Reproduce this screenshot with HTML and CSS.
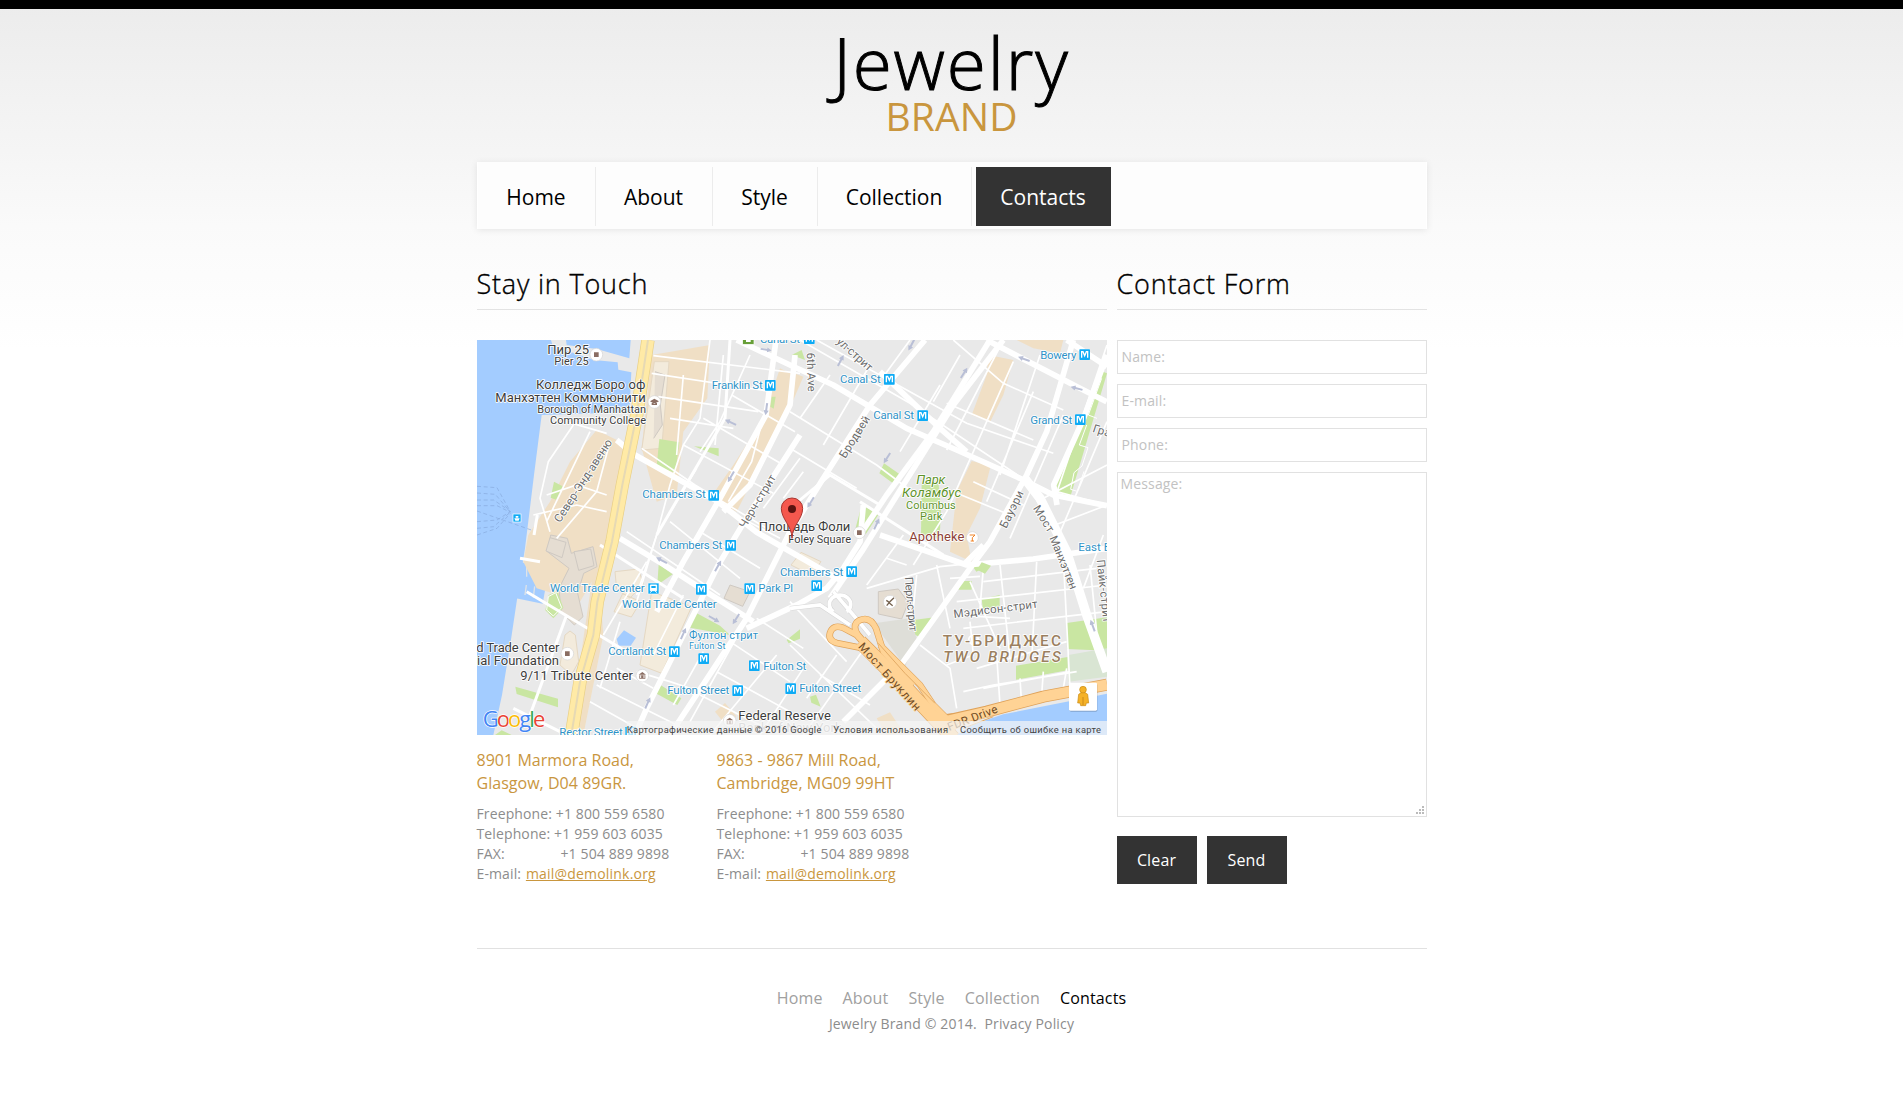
FILE: index.html
```html
<!DOCTYPE html>
<html lang="en">
<head>
<meta charset="utf-8">
<title>Jewelry Brand - Contacts</title>
<link rel="stylesheet" href="styles.css">
</head>
<body>
<div class="page">
  <header class="header">
    <h1 class="logo"><span class="logo-name">Jewelry</span><span class="logo-sub">BRAND</span></h1>
    <nav class="nav">
      <a class="nav-item nav-home">Home</a>
      <a class="nav-item nav-about">About</a>
      <a class="nav-item nav-style">Style</a>
      <a class="nav-item nav-collection">Collection</a>
      <a class="nav-item nav-current">Contacts</a>
    </nav>
  </header>

  <main class="content">
    <section class="touch">
      <h2 class="title title-touch">Stay in Touch</h2>
      <svg class="map" viewBox="21 15 1890 1185" preserveAspectRatio="none">
        <defs>
          <symbol id="metro" viewBox="0 0 34 34">
            <rect width="34" height="34" rx="3" fill="#fff"/>
            <rect x="1" y="1" width="32" height="32" rx="2" fill="#0eabf5"/>
            <path d="M8 26V8h4l5 12 5-12h4v18" fill="none" stroke="#fff" stroke-width="4"/>
          </symbol>
          <symbol id="arrow" viewBox="0 0 40 16">
            <path d="M2 8h28" stroke="#b9bfd6" stroke-width="6"/><path d="M24 0l15 8-15 8z" fill="#b9bfd6"/>
          </symbol>
        </defs>
        <rect x="21" y="15" width="1890" height="1185" fill="#e9e9e9"/>
        <!-- rivers -->
        <g fill="#a3ccff">
          <path d="M21 15H243L250 38 300 50 372 75 443 82 445 104 484 112 478 232 215 240 192 420 165 640 140 800 122 920 96 1080 70 1200H21z"/>
          <path d="M288 15H482L478 70 380 42 290 30z"/>
          <path d="M150 682L238 694 218 806 138 790z"/>
          <path d="M462 886L498 908 482 932 446 932 440 912z"/>
          <path d="M1460 1200L1500 1172 1600 1138 1911 1076V1200z"/>
        </g>
        <path d="M170 695v30M192 690v36M218 700l-6 34M165 780l4-30M190 788l4-34" stroke="#dfe3e8" stroke-width="4"/>
        <g fill="none" stroke="#86a9dd" stroke-width="2" stroke-dasharray="12 8">
          <path d="M21 454l60 4 40 72M21 474l55 4 44 52M21 495h50l50 34M21 512h60l40 20M21 560l60-5 38-24M21 580l50-5 48-42M21 600l60-20 40-45M21 528l200 70"/>
        </g>
        <!-- built-up blocks -->
        <g fill="#f0dfc5">
          <path d="M545 60L720 30 712 190 640 290 620 480 560 500 515 340z"/>
          <path d="M380 285L470 330 410 600 400 680 330 800 200 760 160 680 175 600 240 500 300 380z"/>
          <path d="M930 100L990 130 960 200 890 350 800 530 720 490 790 390 880 250z"/>
          <path d="M1555 60L1630 75 1600 180 1560 262 1505 240 1550 120z"/>
          <path d="M1640 15H1780L1770 55 1690 40z"/>
          <path d="M1505 378L1562 392 1530 520 1490 600 1505 680 1440 650 1460 470z"/>
          <path d="M960 110l40 15-30 70-30-10z"/>
          <path d="M380 640L330 980 300 1200H340L400 900z"/>
          <path d="M735 1130l30-26 34 40-30 28zM1220 1150l40-18 40 60-50 8z"/>
        </g>
        <g fill="#f3ebdc" stroke="#e5d8c3" stroke-width="3">
          <path d="M553 80h44l-22 260-60 5z"/>
          <path d="M545 770L665 815 575 1015 510 990z"/>
          <path d="M435 710l70-8 15 45-40 42-40-25zM432 830l26-54 54 24-28 46zM963 690l30-38 60 28-30 40zM285 900l15-12 16 12 10 80-22 40-34-30z"/>
        </g>
        <g fill="#e5ddd2" stroke="#cfc9c2" stroke-width="3">
          <path d="M242 600l50 10 12 45 65-20 12 60-40 20-18 60 16 70-26 25-40-40-6-70 30-60-65-50z"/>
          <path d="M240 608l48 14-12 46-48-20zM312 650l50-8 10 50-46 14zM555 110l30 10-14 90 6 60-26 40"/>
          <path d="M780 750l60 20-22 44-56-24zM1225 770l60-8 30 40-20 50-70-15z"/>
        </g>
        <!-- parks -->
        <g fill="#c9e6a2">
          <path d="M568 312l60 10-12 92-56-20z"/>
          <path d="M672 334l74 6v24zM905 185h12l-6 36-10-6zM252 440l26 14-20 40-16-6zM1242 385l46 32-16 30-44-32z"/>
          <path d="M1355 440h50l8 80-4 90-56-10z"/>
          <path d="M1175 510l52 26-40 62-30-20zM1885 105l26 10-110 370-56-20 92-210z"/>
          <path d="M566 688l42 30-46 32zM675 832l75 40 30 28-120-22zM236 780l26-12 18 50-30 32-24-24z"/>
          <path d="M136 1055l128 36v26l-124-40zM568 1048l66 42-12 20-66-36z"/>
          <path d="M1330 855l64-8-44 60-30-15zM1535 792l54-12v34l-50 10zM1790 864l84-12 37-5v100l-120-5z"/>
          <path d="M1638 992l155-26v40l-155 28zM1475 738h30v26h-40zM1505 690l26-8 10 18-22 10zM950 915l40-32v28l-34 14z"/>
          <path d="M1020 1085l18-6 14 36-28-12zM75 1200l20-14 30 14zM965 60l40 15-10-30z"/>
        </g>
        <path d="M1212 865l108-15 20 60-35 85z" fill="#deded8"/>
        <path d="M1795 960l116-20v85l-116 15z" fill="#d9e5d3"/>
        <g fill="none" stroke="#fff" stroke-width="3"><path d="M1895 130l-40 110 26 10M1850 270l-22 60 26 8-18 55-24 20-10 50 20 6 20-60"/><path d="M235 785l22-12 18 45-25 25-20-18z"/></g>

        <!-- minor streets -->
        <g fill="none" stroke="#fff" stroke-width="5">
          <path d="M550 62L990 115M545 115l360 55M565 185l300 45M600 250l190 30M515 340l160 110 215 130M640 330l270 145M700 250l240 140M785 180l190 110"/>
          <path d="M720 15L690 250 640 330 600 450 560 600M640 120l-20 240M760 60L735 330M840 60l-90 200-60 90M990 370L880 520M680 400L560 600 500 780M905 150l-60 230-70 120"/>
          <path d="M310 270l-75 110-25 110 30 100M360 290L230 560M420 320l-40 150-120 140M230 480l90-30 90 30M190 540l130-30 90 20M290 260l120 35"/>
          <path d="M990 15l330 190 330 220M1040 15l450 250 260 90M1080 120l-90 130M1200 90L1060 330M1320 15l-80 110M1410 150l-120 200M1470 60l-80 140M960 230l260 160 120 90M960 340l200 120M1000 410l-60 80"/>
          <path d="M1450 15l150 130 180 80M1430 205l260 110M1600 15l-170 330M1710 60l-120 360M1630 80l-200 450-100 160M1690 170l-140 330M1780 240l-160 370M1510 440l150 70M1450 470l170 70"/>
          <path d="M1911 30l-150 440M1911 260l-140 330M1760 470l150 40M1730 580l181-70M1700 500l211-110M1900 600l-60 160"/>
          <path d="M470 590L750 780M600 560L810 730M690 590l180 110M760 520l170 90M560 600l-60 200M640 780l-90 180M530 680L400 900M450 860l-60 200M380 1050l260 130M440 1000l110 60M500 1010l100 30 60 20M360 1100l160 90M700 950L610 1110M820 870L660 1160M740 1010L960 1130M690 1080l220 110M780 920l180 120M860 850l140 90M920 960l-200 240M1000 1000l-130 200"/>
          <path d="M1190 930L1000 1200M960 930l260 250M1100 960l-90 130M1050 1020l150 90M960 800l170 180"/>
          <path d="M1190 760l220-65 95-10M1300 600l-110 150M1250 670l60 20M1340 720l-10 100M1400 690l40 190M1440 730l90-6M1500 740l90 200M1460 800l450-50M1540 700l-10 120M1590 690l30 280M1700 680l-15 300M1780 670l20 390M1860 690l20 200"/>
          <path d="M1540 740l340-40M1450 840l170 10M1480 880l430-50M1500 860l10 100-80 30M1350 930l90 70 20 120M1520 1000l270-80M1540 1060l260-50M1580 960l10 150M1650 1030l5 80M1720 1010l-5 70M1480 1070l90-20 250-40M1790 1000l-10 60M1510 900a14 14 0 1 0 1 0"/>
        </g>
        <g fill="none" stroke="#fff" stroke-width="9">
          <path d="M780 15L765 250 560 600M290 840L180 1140M390 630L640 790M170 770l300 180M130 1120l140 70M210 680l-60-10M192 600l10-60"/>
          <path d="M1170 500l250 160M960 520l120-100 150 90"/>
        </g>
        <!-- main streets -->
        <g fill="none" stroke="#fff" stroke-width="17" stroke-linejoin="round">
          <path d="M440 315L490 357 740 497 860 592 1110 735"/>
          <path d="M450 610L580 688 700 765 850 860"/>
          <path d="M918 15L888 240 750 490 640 680 560 830"/>
          <path d="M990 300L820 565 745 690 690 800 530 1120 495 1200"/>
          <path d="M1365 15L1200 210 1060 430 960 590 830 850 600 1200"/>
          <path d="M1560 15L1390 290 1250 480 1170 600"/>
          <path d="M1600 15L1450 210 1300 450 1175 650 1080 790"/>
          <path d="M800 15l160 75 130 60 220 130 150 65 190 85 100 50 161 32"/>
          <path d="M1230 110l180 170 80 70"/>
          <path d="M1550 15l280 145 80 40M1810 15l-80 275-60 130-110 200-60 80-200 280-180 180"/>
          <path d="M1790 15l121 80M1911 60l-70 190-90 200 10 60"/>
          <path d="M830 880l160-75 80-45 50-60 50-80 10-110"/>
          <path d="M1230 600l260 90 200-18 221-32M1540 630l-60 60"/>
          <path d="M975 60l-15 150-120 240-80 80"/>
        </g>
        <path d="M1535 682l28 10-18 24-24-12z" fill="#c9e6a2"/>
        <path d="M1660 425L1710 490 1790 650 1850 840 1911 1010" fill="none" stroke="#fff" stroke-width="28"/>
        <g fill="none" stroke="#d6d6d6" stroke-width="14"><path d="M960 820l90-10 90 60M1090 770l60 70 50 60M1090 830a32 28 0 1 1 40 0"/></g>
        <g fill="none" stroke="#fff" stroke-width="11"><path d="M960 820l90-10 90 60M1090 770l60 70 50 60M1090 830a32 28 0 1 1 40 0"/></g>
        <!-- highways -->
        <path d="M534 15L500 240 457 450 426 620 382 800 370 900 330 1040 304 1200" fill="none" stroke="#e8cf86" stroke-width="40"/>
        <path d="M534 15L500 240 457 450 426 620 382 800 370 900 330 1040 304 1200" fill="none" stroke="#ffeaa6" stroke-width="36"/>
        <path d="M534 15L500 240 457 450 426 620 382 800 370 900 330 1040 304 1200" fill="none" stroke="#e6d9b4" stroke-width="6"/>
        <g fill="none" stroke-linejoin="round">
          <path d="M1235 985L1160 900 1118 878Q1088 868 1080 894 1074 916 1100 924L1190 942M1330 1050L1240 950 1218 880Q1200 842 1168 856 1144 870 1164 900L1240 990" stroke="#dfa259" stroke-width="20"/>
          <path d="M1170 920L1300 1050 1450 1210" stroke="#dfa259" stroke-width="44"/>
          <path d="M1230 930L1350 1050 1390 1110 1460 1180" stroke="#dfa259" stroke-width="20"/>
          <path d="M1400 1160l50-8 100-22 170-45 191-36" stroke="#dfa259" stroke-width="36"/>
          <path d="M1235 985L1160 900 1118 878Q1088 868 1080 894 1074 916 1100 924L1190 942M1330 1050L1240 950 1218 880Q1200 842 1168 856 1144 870 1164 900L1240 990" stroke="#ffd395" stroke-width="16"/>
          <path d="M1170 920L1300 1050 1450 1210" stroke="#ffd395" stroke-width="40"/>
          <path d="M1230 930L1350 1050 1390 1110 1460 1180" stroke="#ffd395" stroke-width="16"/>
          <path d="M1370 1130l50 30 130-30 170-45 191-36" stroke="#ffd395" stroke-width="31"/>
          <path d="M1225 925l80 90 90 90M1480 1180l90-35" stroke="#e3ab66" stroke-width="3"/>
        </g>
        <!-- one-way arrows -->
        <use href="#arrow" x="-18" y="-8" width="36" height="16" transform="translate(888 44) rotate(8)"/>
        <use href="#arrow" x="-20" y="-8" width="40" height="16" transform="translate(889 222) rotate(98)"/>
        <use href="#arrow" x="-20" y="-8" width="40" height="16" transform="translate(782 262) rotate(205)"/>
        <use href="#arrow" x="-20" y="-8" width="40" height="16" transform="translate(783 425) rotate(120)"/>
        <use href="#arrow" x="-20" y="-8" width="40" height="16" transform="translate(1112 77) rotate(-62)"/>
        <use href="#arrow" x="-20" y="-8" width="40" height="16" transform="translate(1324 30) rotate(118)"/>
        <use href="#arrow" x="-20" y="-8" width="40" height="16" transform="translate(1482 114) rotate(-58)"/>
        <use href="#arrow" x="-20" y="-8" width="40" height="16" transform="translate(1662 72) rotate(200)"/>
        <use href="#arrow" x="-20" y="-8" width="40" height="16" transform="translate(1820 160) rotate(195)"/>
        <use href="#arrow" x="-20" y="-8" width="40" height="16" transform="translate(1251 369) rotate(122)"/>
        <use href="#arrow" x="-20" y="-8" width="40" height="16" transform="translate(1022 502) rotate(122)"/>
        <use href="#arrow" x="-20" y="-8" width="40" height="16" transform="translate(1220 567) rotate(-65)"/>
        <use href="#arrow" x="-20" y="-8" width="40" height="16" transform="translate(575 676) rotate(208)"/>
        <use href="#arrow" x="-20" y="-8" width="40" height="16" transform="translate(744 693) rotate(-60)"/>
        <use href="#arrow" x="-20" y="-8" width="40" height="16" transform="translate(732 852) rotate(30)"/>
        <use href="#arrow" x="-20" y="-8" width="40" height="16" transform="translate(798 852) rotate(122)"/>
        <use href="#arrow" x="-20" y="-8" width="40" height="16" transform="translate(640 896) rotate(-66)"/>
        <use href="#arrow" x="-20" y="-8" width="40" height="16" transform="translate(533 1104) rotate(-66)"/>
        <use href="#arrow" x="-20" y="-8" width="40" height="16" transform="translate(1868 872) rotate(-110)"/>

        <!-- transit stations -->
        <g class="transit">
          <text x="870" y="25" textLength="120">Canal St</text>
          <text x="725" y="161" textLength="153">Franklin St</text>
          <text x="1110" y="143" textLength="122">Canal St</text>
          <text x="1210" y="251" textLength="122">Canal St</text>
          <text x="1711" y="71" textLength="108">Bowery</text>
          <text x="1681" y="266" textLength="126">Grand St</text>
          <text x="517" y="490" textLength="190">Chambers St</text>
          <text x="568" y="641" textLength="189">Chambers St</text>
          <text x="930" y="722" textLength="190">Chambers St</text>
          <text x="240" y="770" textLength="284">World Trade Center</text>
          <text x="456" y="818" textLength="284">World Trade Center</text>
          <text x="865" y="770" textLength="104">Park Pl</text>
          <text x="415" y="959" textLength="174">Cortlandt St</text>
          <text x="657" y="912" textLength="207" class="t30">Фултон стрит</text>
          <text x="657" y="941" textLength="109" class="t26">Fulton St</text>
          <text x="880" y="1004" textLength="129">Fulton St</text>
          <text x="592" y="1078" textLength="186">Fulton Street</text>
          <text x="988" y="1070" textLength="186">Fulton Street</text>
          <text x="268" y="1202" textLength="190">Rector Street</text>
          <text x="1825" y="647">East Broadway</text>
        </g>
        <use href="#metro" x="884" y="134" width="34" height="34"/><use href="#metro" x="714" y="464" width="34" height="34"/>
        <use href="#metro" x="1001" y="-6" width="34" height="34"/><use href="#metro" x="1241" y="116" width="34" height="34"/>
        <use href="#metro" x="1341" y="225" width="34" height="34"/><use href="#metro" x="1827" y="42" width="34" height="34"/>
        <use href="#metro" x="1814" y="237" width="34" height="34"/><use href="#metro" x="765" y="614" width="34" height="34"/>
        <use href="#metro" x="1128" y="693" width="34" height="34"/><use href="#metro" x="1023" y="735" width="34" height="34"/>
        <use href="#metro" x="677" y="746" width="34" height="34"/><use href="#metro" x="822" y="744" width="34" height="34"/>
        <use href="#metro" x="596" y="933" width="34" height="34"/><use href="#metro" x="684" y="954" width="34" height="34"/>
        <use href="#metro" x="836" y="975" width="34" height="34"/><use href="#metro" x="786" y="1050" width="34" height="34"/>
        <use href="#metro" x="945" y="1044" width="34" height="34"/><use href="#metro" x="465" y="1174" width="34" height="34"/>
        <rect x="818" y="-4" width="34" height="32" fill="#689f38" stroke="#fff" stroke-width="2"/><path d="M828 15h14v6h-14z" fill="#fff"/>
        <rect x="534" y="744" width="33" height="33" rx="2" fill="#0eabf5" stroke="#fff" stroke-width="2"/>
        <path d="M541 750h19v17h-19zM541 773l5-6M560 773l-5-6" fill="#fff" stroke="#fff" stroke-width="3"/><path d="M544 753h13v6h-13z" fill="#0eabf5"/>
        <rect x="129" y="537" width="24" height="24" fill="#0eabf5" stroke="#fff" stroke-width="2"/><path d="M133 550h16l-3 7h-10zM137 543h8v5h-8z" fill="#fff"/>

        <!-- places -->
        <g class="place">
          <text x="232" y="57" class="t36" textLength="125">Пир 25</text>
          <text x="253" y="90" textLength="103">Pier 25</text>
          <text x="198" y="161" class="t36" textLength="328">Колледж Боро оф</text>
          <text x="76" y="200" class="t36" textLength="451">Манхэттен Коммьюнити</text>
          <text x="202" y="233" textLength="326">Borough of Manhattan</text>
          <text x="240" y="266" textLength="288">Community College</text>
          <text x="866" y="589" class="t36" textLength="275">Площадь Фоли</text>
          <text x="955" y="623" textLength="188">Foley Square</text>
          <text x="19" y="950" class="t36" textLength="249">d Trade Center</text>
          <text x="21" y="989" class="t36" textLength="246">ial Foundation</text>
          <text x="151" y="1034" class="t36" textLength="338">9/11 Tribute Center</text>
          <text x="805" y="1155" class="t36" textLength="278">Federal Reserve</text>
          <text x="805" y="1192" class="t36 faint" textLength="310">Bank of New York</text>
          <text x="1318" y="617" class="t36 food" textLength="165">Apotheke</text>
        </g>
        <g class="park">
          <text x="1339" y="448" class="t36" textLength="87">Парк</text>
          <text x="1296" y="487" class="t36" textLength="177">Коламбус</text>
          <text x="1308" y="521" textLength="149" class="upright">Columbus</text>
          <text x="1350" y="554" textLength="67" class="upright">Park</text>
        </g>
        <g class="street">
          <text transform="translate(270 565) rotate(-57)" textLength="290">Север-Энд-авеню</text>
          <text transform="translate(826 582) rotate(-59)" textLength="180">Черч-стрит</text>
          <text transform="translate(1010 53) rotate(88)" textLength="118">6th Ave</text>
          <text transform="translate(1098 22) rotate(42)" textLength="132">ул-стрит</text>
          <text transform="translate(1126 372) rotate(-58)" textLength="142">Бродвей</text>
          <text transform="translate(1609 582) rotate(-64)" textLength="120">Бауэри</text>
          <text transform="translate(1688 520) rotate(58)" textLength="88">Мост</text>
          <text transform="translate(1738 608) rotate(68)" textLength="170">Манхэттен</text>
          <text transform="translate(1866 290) rotate(18)" textLength="75">Гран</text>
          <text transform="translate(1880 675) rotate(84)" textLength="190">Пайк-стрит</text>
          <text transform="translate(1304 727) rotate(85)" textLength="164">Перл-стрит</text>
          <text transform="translate(1452 849) rotate(-7)" textLength="254">Мэдисон-стрит</text>
          <text transform="translate(1163 936) rotate(48)" textLength="260" class="hwy">Мост Бруклин</text>
          <text transform="translate(1438 1188) rotate(-21)" textLength="158" class="hwy">FDR Drive</text>
        </g>
        <g class="district">
          <text x="1418" y="932" textLength="355">ТУ-БРИДЖЕС</text>
          <text x="1420" y="980" textLength="352" class="italic">TWO BRIDGES</text>
        </g>
        <g fill="#fff" stroke="#d5d5d5" stroke-width="2">
          <circle cx="379" cy="59" r="19"/><circle cx="553" cy="201" r="19"/><circle cx="1168" cy="593" r="18"/>
          <circle cx="292" cy="956" r="19"/><circle cx="517" cy="1022" r="19"/><circle cx="1507" cy="608" r="18"/><circle cx="779" cy="1157" r="19"/><circle cx="1260" cy="801" r="20"/>
        </g>
        <g fill="#8a6d62">
          <path d="M372 52h14v14h-14zM1161 586h14v14h-14zM285 949h14v14h-14zM540 199l13-8 14 8-14 7zM545 204v6h16v-6M506 1019l11-8 11 8zM508 1021h18v10h-18zM768 1156l11-8 11 8zM770 1158h18v10h-18z"/>
        </g>
        <path d="M512 1021v8M522 1021v8M775 1158v8M784 1158v8" stroke="#fff" stroke-width="3"/>
        <path d="M1250 812l8-10-9-6M1258 802l14-14M1258 804l10 8" stroke="#74614e" stroke-width="4" fill="none"/>
        <path d="M1499 600h16l-8 8v10M1502 618h10" stroke="#f08225" stroke-width="3" fill="none"/>
        <!-- pin -->
        <path d="M966 610C965 570 934 553 934 520a32 31 0 0 1 64 0C998 553 967 570 966 610z" fill="#f5584e" stroke="#a83630" stroke-width="3"/>
        <circle cx="966" cy="522" r="12" fill="#5b1310"/>
        <!-- map controls -->
        <rect x="1799" y="1046" width="83" height="84" rx="4" fill="#000" opacity=".2"/>
        <rect x="1797" y="1043" width="84" height="84" rx="4" fill="#fff"/>
        <path d="M1826 1078q13-12 27 0l3 26h-7l-2 8h-15l-2-8h-7z" fill="#f5b228" stroke="#c78915" stroke-width="2"/><path d="M1839 1086v24" stroke="#b87914" stroke-width="2"/>
        <circle cx="1839" cy="1064" r="10" fill="#f5b228" stroke="#c78915" stroke-width="2"/>
        <rect x="470" y="1158" width="1441" height="42" fill="#f5f5f5" opacity=".7"/>
        <g class="legal">
          <text x="470" y="1193" textLength="584">Картографические данные © 2016 Google</text>
          <text x="1090" y="1193" textLength="344">Условия использования</text>
          <text x="1470" y="1193" textLength="423">Сообщить об ошибке на карте</text>
        </g>
        <text class="google" x="38" y="1176" textLength="188"><tspan fill="#4285f4">G</tspan><tspan fill="#ea4335">o</tspan><tspan fill="#fbbc05">o</tspan><tspan fill="#4285f4">g</tspan><tspan fill="#34a853">l</tspan><tspan fill="#ea4335">e</tspan></text>
      </svg>
      <div class="offices">
        <address class="office">
          <p class="office-name">8901 Marmora Road,<br>Glasgow, D04 89GR.</p>
          <p>Freephone: +1 800 559 6580</p>
          <p>Telephone: +1 959 603 6035</p>
          <p><span class="fax">FAX:</span>+1 504 889 9898</p>
          <p>E-mail: <a class="mail">mail@demolink.org</a></p>
        </address>
        <address class="office">
          <p class="office-name">9863 - 9867 Mill Road,<br>Cambridge, MG09 99HT</p>
          <p>Freephone: +1 800 559 6580</p>
          <p>Telephone: +1 959 603 6035</p>
          <p><span class="fax">FAX:</span>+1 504 889 9898</p>
          <p>E-mail: <a class="mail">mail@demolink.org</a></p>
        </address>
      </div>
    </section>

    <section class="contact">
      <h2 class="title title-form">Contact Form</h2>
      <form class="form">
        <input class="field" placeholder="Name:">
        <input class="field" placeholder="E-mail:">
        <input class="field" placeholder="Phone:">
        <div class="message-box">
          <textarea class="field message" placeholder="Message:"></textarea>
          <svg class="grip" viewBox="0 0 8 8"><path d="M6 0h2v2H6zM3 3h2v2H3zM6 3h2v2H6zM0 6h2v2H0zM3 6h2v2H3zM6 6h2v2H6z" fill="#bbb"/></svg>
        </div>
        <div class="buttons"><a class="button">Clear</a><a class="button">Send</a></div>
      </form>
    </section>
  </main>

  <footer class="footer">
    <nav class="footer-nav"><a>Home</a><a>About</a><a>Style</a><a>Collection</a><a class="footer-current">Contacts</a></nav>
    <p class="copyright">Jewelry Brand © 2014.&nbsp; Privacy Policy</p>
  </footer>
</div>
</body>
</html>
```
FILE: styles.css
```css
* { box-sizing: border-box; }
body {
  margin: 0;
  min-height: 1100px;
  border-top: 9px solid #000;
  background: #fff linear-gradient(#fff 1px, #ececec 1px, #f5f5f5 150px, #fafafa 225px, #fff 350px) no-repeat;
  font: 14px/20px "Open Sans", "Noto Sans", sans-serif;
  letter-spacing: 0.12px;
  color: #8c8c8c;
}
h1, h2, p { margin: 0; font-weight: 400; }
.page { width: 950px; margin: 0 auto; }

.header { height: 220px; display: flex; flex-direction: column; }
.logo { height: 153px; padding-top: 16px; display: flex; flex-direction: column; align-items: center; color: #000; }
.logo-name { font-size: 71px; line-height: 76px; height: 76px; font-weight: 300; letter-spacing: 1.9px; -webkit-text-stroke: 1px #000; }
.logo-sub { font-size: 39px; line-height: 30px; letter-spacing: 0.1px; color: #c9963e; }

.nav {
  height: 67px;
  padding: 5px 0 3px;
  display: flex;
  background: #fdfdfd;
  border: 1px solid #fff;
  border-width: 0 1px;
  box-shadow: 0 1px 7px rgba(0, 0, 0, .09);
}
.nav-item {
  height: 59px;
  border-right: 1px solid #ececec;
  font-size: 21px;
  line-height: 61px;
  letter-spacing: 0;
  text-align: center;
  color: #000;
}
.nav-home { width: 118px; }
.nav-about { width: 117px; }
.nav-style { width: 105px; }
.nav-collection { width: 154px; }
.nav-current { width: 135px; margin-left: 4px; border: 0; background: #333; color: #fff; }

.content { display: flex; gap: 10px; height: 719px; }
.touch { width: 630px; }
.contact { width: 310px; }
.title {
  height: 81px;
  margin-bottom: 30px;
  padding-top: 35px;
  border-bottom: 1px solid #e3e3e3;
  font-size: 27px;
  line-height: 40px;
  font-weight: 300;
  letter-spacing: 0.8px;
  -webkit-text-stroke: 0.35px #000;
  color: #000;
}
.map { display: block; width: 630px; height: 395px; font-family: Roboto, sans-serif; letter-spacing: 0; }
.map text { font-size: 34.5px; stroke: #fff; stroke-width: 5px; stroke-linejoin: round; paint-order: stroke; }
.map .transit text { fill: #3093c7; }
.map .place text { fill: #3c3c3c; font-size: 33px; }
.map .park text { fill: #5d9228; font-size: 33px; font-style: italic; }
.map .park text.upright { font-style: normal; }
.map .street text { fill: #6c6c6c; }
.map .street text.hwy { fill: #6e4a23; stroke: #ffd395; }
.map .district text { fill: #9b7f60; font-size: 46px; font-weight: 500; }
.map .district text.italic { font-style: italic; }
.map .legal text { fill: #444; font-size: 28px; stroke: none; }
.map .transit text.t30 { font-size: 33px; }
.map .transit text.t26 { font-size: 27px; }
.map .place text.t36, .map .park text.t36 { font-size: 39px; }
.map .place text.faint { fill: #aaa; }
.map .place text.food { fill: #8d4136; }
.map text.google { font: 66px "Open Sans", sans-serif; stroke-width: 4px; }

.offices { display: flex; padding-top: 14px; }
.office { width: 240px; font-style: normal; }
.office-name { margin-bottom: 9px; font-size: 16px; line-height: 23px; letter-spacing: 0.03px; color: #c9963e; }
.fax { display: inline-block; width: 84px; }
.mail { margin-left: 1px; letter-spacing: 0.2px; color: #c9963e; text-decoration: underline; }

.form { display: flex; flex-direction: column; gap: 10px; }
.field {
  display: block;
  width: 310px;
  height: 34px;
  padding: 0 3px 2px 4px;
  border: 1px solid #e1e1e1;
  outline: 0;
  background: #fff;
  font: 14px/20px "Open Sans", "Noto Sans", sans-serif;
  letter-spacing: 0.15px;
}
.field::placeholder { color: #c2c2c2; opacity: 1; }
.message-box { position: relative; height: 345px; }
.message { height: 345px; padding: 1px 3px; resize: none; }
.grip { position: absolute; right: 3px; bottom: 3px; width: 8px; height: 8px; }
.buttons { display: flex; gap: 10px; margin-top: 9px; }
.button { width: 80px; height: 48px; font-size: 16px; line-height: 49px; text-align: center; background: #333; color: #fff; }

.footer { border-top: 1px solid #e1e1e1; padding-top: 37px; text-align: center; letter-spacing: 0.16px; }
.footer-nav { display: flex; justify-content: center; gap: 20px; font-size: 16px; line-height: 24px; color: #a0a0a0; }
.footer-current { color: #000; }
.copyright { padding-top: 4px; }
```
